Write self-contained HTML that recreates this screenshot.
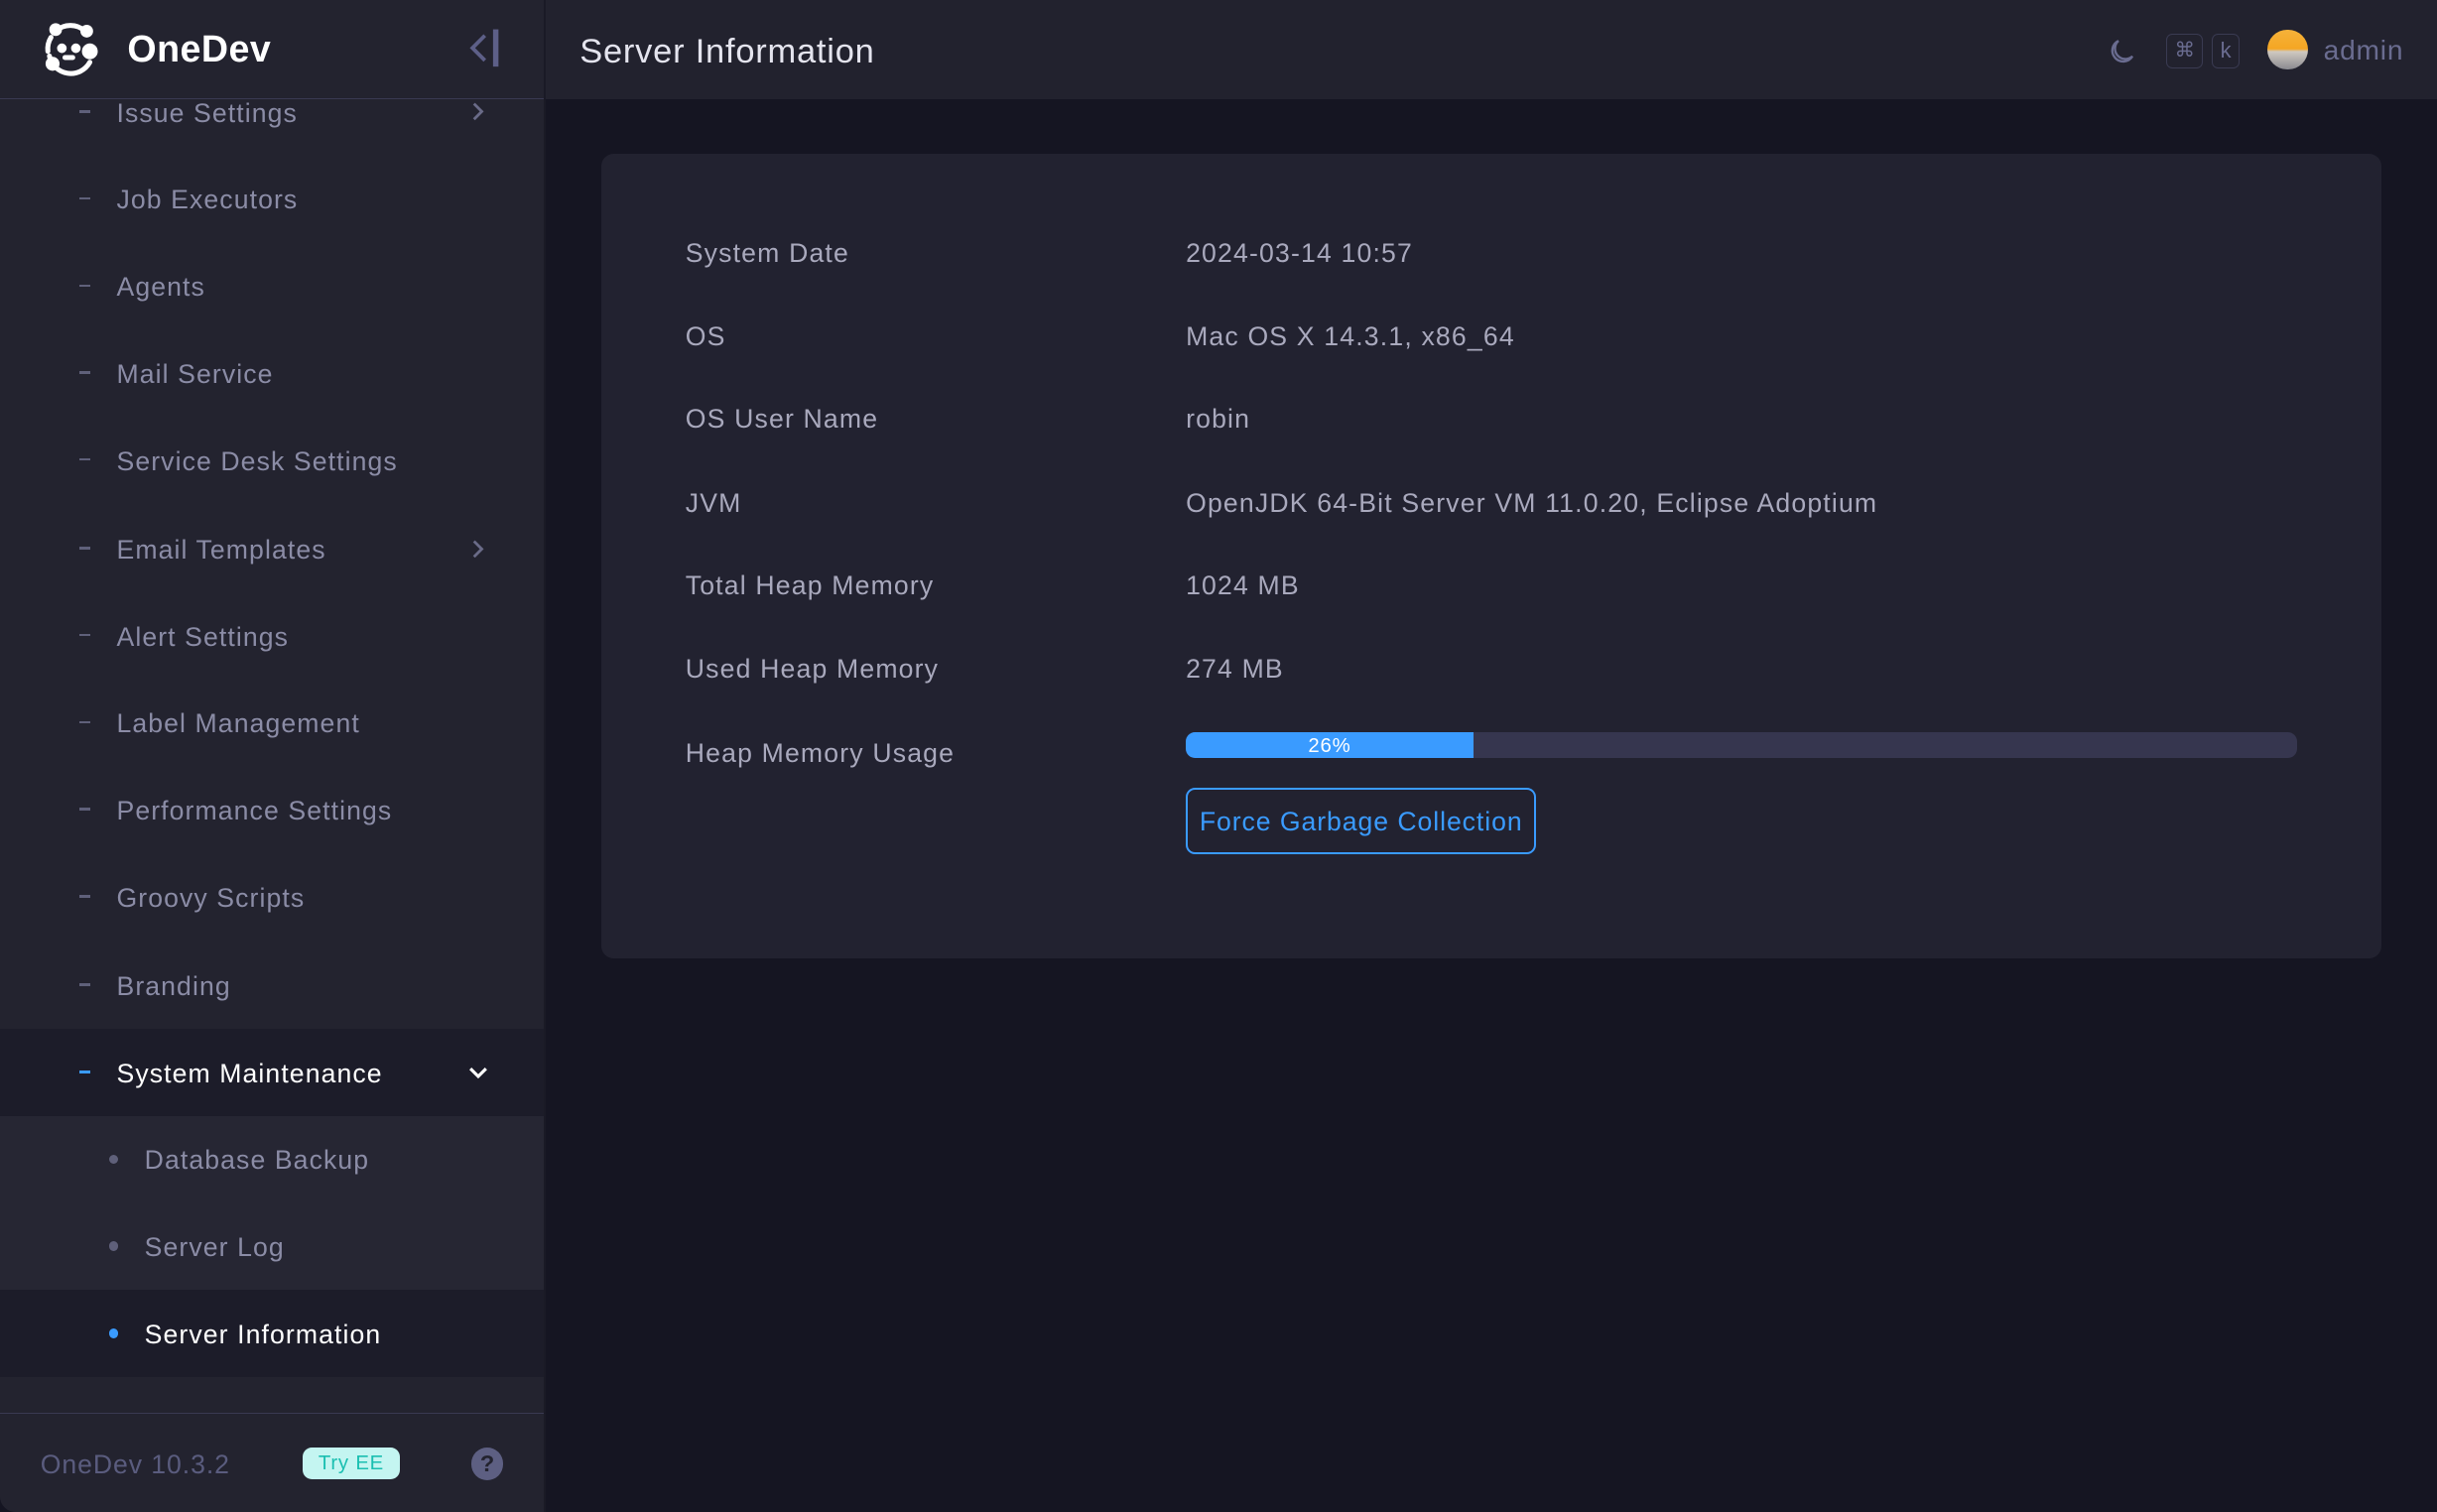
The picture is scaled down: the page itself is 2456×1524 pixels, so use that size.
<!DOCTYPE html>
<html><head><meta charset="utf-8"><style>
html,body{margin:0;padding:0;background:#151522;overflow:hidden}
#w{zoom:1.5663;width:1568px;height:973px;position:relative;font-family:"Liberation Sans",sans-serif;background:#151522}
.sb{position:absolute;left:0;top:0;width:350px;height:973px;background:#23232f;border-bottom-left-radius:10px;overflow:hidden}
.logo{position:absolute;left:0;top:0;width:350px;height:63px;border-bottom:1px solid #3a3a52;background:#23232f;z-index:2}
.logo .t{position:absolute;left:82px;top:18px;font-size:24px;font-weight:bold;color:#fff;letter-spacing:0.3px}
.it{position:absolute;left:0;width:350px;height:56px;color:#8b8ca6;font-size:17px;letter-spacing:0.7px}
.it span.l{position:absolute;left:75px;top:50%;transform:translateY(-45%)}
.it i{position:absolute;left:51px;top:27px;width:7px;height:1.5px;background:#5f607a}
.it b{position:absolute;left:70px;top:25px;width:6px;height:6px;border-radius:3px;background:#5f607a}
.sub span.l{left:93px}
.chev{position:absolute;left:302px;top:22px}
.hd{position:absolute;left:351px;top:0;width:1217px;height:64px;background:#22222e}
.hd .t{position:absolute;left:22px;top:21px;font-size:22px;color:#e4e4ee;letter-spacing:0.5px}
.card{position:absolute;left:387px;top:99px;width:1145px;height:518px;background:#222230;border-radius:8px}
.row{position:absolute;font-size:17px;color:#a9a9bd;letter-spacing:0.75px}
.foot{position:absolute;left:0;top:909px;width:350px;height:64px;border-top:1px solid #3a3a52;background:#23232f}
</style></head><body><div id="w">
<div class="sb">
 <div class="logo">
  <svg style="position:absolute;left:27px;top:14px" width="37" height="36" viewBox="0 0 37 36" fill="none" stroke="#fff" stroke-width="3.2" stroke-linecap="round"><path d="M9 6 A14 14 0 0 1 28 6"/><path d="M5 22 A14 14 0 0 0 31 26"/><path d="M4 19 A14 14 0 0 1 6 10"/><circle cx="9" cy="5" r="2.5" fill="#fff"/><circle cx="29" cy="6" r="2.5" fill="#fff"/><circle cx="31" cy="19" r="3.5" fill="#fff"/><circle cx="7" cy="27" r="4.5" fill="#fff" stroke="none"/><circle cx="13" cy="17" r="1.5" fill="#fff"/><circle cx="22" cy="17" r="1.5" fill="#fff"/><path d="M15 23 h5"/></svg>
  <div class="t">OneDev</div>
  <svg style="position:absolute;left:302px;top:18px" width="20" height="26" viewBox="0 0 20 26" fill="none" stroke="#5d5f88" stroke-width="2.4"><path d="M10 5 L2 13 L10 21"/><path d="M17 1 V25" stroke-width="3.5"/></svg>
 </div>
 <div class="it" style="top:44px"><i></i><span class="l">Issue Settings</span><svg class="chev" width="10" height="12" viewBox="0 0 10 12" fill="none" stroke="#6a6b88" stroke-width="1.8"><path d="M3 1 L8 6 L3 11"/></svg></div>
 <div class="it" style="top:100px"><i></i><span class="l">Job Executors</span></div>
 <div class="it" style="top:156px"><i></i><span class="l">Agents</span></div>
 <div class="it" style="top:212px"><i></i><span class="l">Mail Service</span></div>
 <div class="it" style="top:268px"><i></i><span class="l">Service Desk Settings</span></div>
 <div class="it" style="top:325px"><i></i><span class="l">Email Templates</span><svg class="chev" width="10" height="12" viewBox="0 0 10 12" fill="none" stroke="#6a6b88" stroke-width="1.8"><path d="M3 1 L8 6 L3 11"/></svg></div>
 <div class="it" style="top:381px"><i></i><span class="l">Alert Settings</span></div>
 <div class="it" style="top:437px"><i></i><span class="l">Label Management</span></div>
 <div class="it" style="top:493px"><i></i><span class="l">Performance Settings</span></div>
 <div class="it" style="top:549px"><i></i><span class="l">Groovy Scripts</span></div>
 <div class="it" style="top:606px"><i></i><span class="l">Branding</span></div>
 <div class="it" style="top:662px;background:#1c1c29;color:#fff"><i style="background:#3a9bff"></i><span class="l">System Maintenance</span><svg style="position:absolute;left:301px;top:24px" width="14" height="10" viewBox="0 0 14 10" fill="none" stroke="#fff" stroke-width="2"><path d="M2 2 L7 7 L12 2"/></svg></div>
 <div class="it sub" style="top:718px;background:#262633"><b></b><span class="l">Database Backup</span></div>
 <div class="it sub" style="top:774px;background:#262633"><b></b><span class="l">Server Log</span></div>
 <div class="it sub" style="top:830px;background:#1c1c29;color:#fff"><b style="background:#3a9bff"></b><span class="l">Server Information</span></div>
 <div class="it" style="top:886px;height:23px;background:#23232f"></div>
 <div class="foot">
  <div style="position:absolute;left:26px;top:23px;font-size:17px;color:#5a5c7e;letter-spacing:0.6px">OneDev 10.3.2</div>
  <div style="position:absolute;left:195px;top:22px;width:62px;height:20px;border-radius:6px;background:#c4f5f1;color:#1bbfb1;font-size:13px;text-align:center;line-height:21px;letter-spacing:0.5px">Try EE</div>
  <div style="position:absolute;left:303px;top:22px;width:21px;height:21px;border-radius:50%;background:#5d5f82;color:#23232f;font-weight:bold;font-size:15px;text-align:center;line-height:21px">?</div>
 </div>
</div>
<div style="position:absolute;left:350px;top:0;width:1px;height:973px;background:#1a1a26"></div>
<div class="hd"><div class="t">Server Information</div>
 <svg style="position:absolute;left:1005px;top:24px" width="18" height="18" viewBox="0 0 18 18" fill="none" stroke="#6a6c90" stroke-width="1.5"><path d="M7 2 A7 7 0 1 0 16 12 A6 6 0 0 1 7 2 Z"/></svg>
 <div style="position:absolute;left:1043px;top:22px;width:22px;height:21px;border:1px solid #3a3b52;border-radius:4px;color:#6a6c90;font-size:13px;text-align:center;line-height:21px">⌘</div>
 <div style="position:absolute;left:1072px;top:22px;width:17px;height:21px;border:1px solid #3a3b52;border-radius:4px;color:#6a6c90;font-size:14px;text-align:center;line-height:20px">k</div>
 <div style="position:absolute;left:1108px;top:19px;width:26px;height:26px;border-radius:50%;background:linear-gradient(#f5b23a 0%,#f5a623 48%,#d0c9c0 55%,#8a8a90 100%)"></div>
 <div style="position:absolute;left:1144px;top:22px;font-size:18px;color:#6a6c90;letter-spacing:0.5px">admin</div>
</div>
<div class="card">
 <div class="row" style="left:54px;top:54px">System Date</div><div class="row" style="left:376px;top:54px">2024-03-14 10:57</div>
 <div class="row" style="left:54px;top:108px">OS</div><div class="row" style="left:376px;top:108px">Mac OS X 14.3.1, x86_64</div>
 <div class="row" style="left:54px;top:161px">OS User Name</div><div class="row" style="left:376px;top:161px">robin</div>
 <div class="row" style="left:54px;top:215px">JVM</div><div class="row" style="left:376px;top:215px">OpenJDK 64-Bit Server VM 11.0.20, Eclipse Adoptium</div>
 <div class="row" style="left:54px;top:268px">Total Heap Memory</div><div class="row" style="left:376px;top:268px">1024 MB</div>
 <div class="row" style="left:54px;top:322px">Used Heap Memory</div><div class="row" style="left:376px;top:322px">274 MB</div>
 <div class="row" style="left:54px;top:376px">Heap Memory Usage</div>
 <div style="position:absolute;left:376px;top:372px;width:715px;height:17px;border-radius:6px;background:#36364f;overflow:hidden"><div style="width:185px;height:17px;background:#3a9bff;color:#fff;font-size:13px;text-align:center;line-height:18px;letter-spacing:0.5px">26%</div></div>
 <div style="position:absolute;left:376px;top:408px;width:223px;height:40px;border:1.5px solid #3a9bff;border-radius:6px;color:#3a9bff;font-size:17px;text-align:center;line-height:41px;letter-spacing:0.6px">Force Garbage Collection</div>
</div>
</div></body></html>
